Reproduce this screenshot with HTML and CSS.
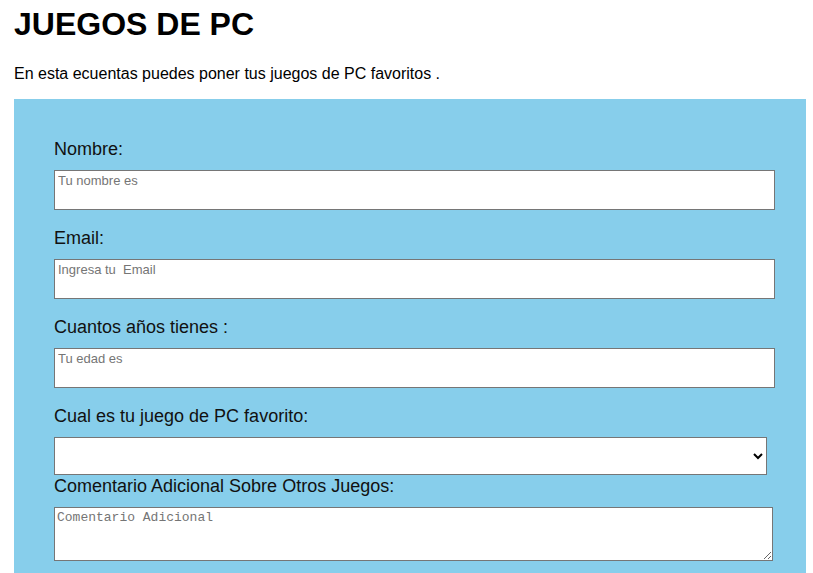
FILE: index.html
```html
<!DOCTYPE html>
<html lang="es">
<head>
<meta charset="utf-8">
<title>Juegos de PC</title>
<link rel="stylesheet" href="styles.css">
</head>
<body>
<h1 class="title">JUEGOS DE PC</h1>
<p class="intro">En esta ecuentas puedes poner tus juegos de PC favoritos .</p>
<form class="panel">
  <label class="field-label" for="nombre">Nombre:</label>
  <input class="text-input" id="nombre" type="text" placeholder="Tu nombre es">
  <label class="field-label" for="email">Email:</label>
  <input class="text-input" id="email" type="email" placeholder="Ingresa tu  Email">
  <label class="field-label" for="edad">Cuantos años tienes :</label>
  <input class="text-input" id="edad" type="text" placeholder="Tu edad es">
  <label class="field-label" for="juego">Cual es tu juego de PC favorito:</label>
  <select class="select-input" id="juego">
    <option></option>
  </select>
  <label class="field-label label-tight" for="comentario">Comentario Adicional Sobre Otros Juegos:</label>
  <textarea class="area-input" id="comentario" placeholder="Comentario Adicional"></textarea>
</form>
</body>
</html>
```
FILE: styles.css
```css
html, body {
  margin: 0;
  padding: 0;
}
body {
  font-family: "Liberation Sans", Arial, sans-serif;
  color: #000;
  background: #fff;
  padding: 0 7px 0 14px;
  overflow: hidden;
  height: 573px;
}
.title {
  font-size: 32px;
  font-weight: bold;
  margin: 0;
  padding-top: 6px;
  line-height: 37px;
}
.intro {
  font-size: 16px;
  margin: 0;
  padding-top: 22px;
  line-height: 18px;
}
.panel {
  margin-top: 16px;
  background: #87ceeb;
  padding: 39px 40px 40px 40px;
  display: flex;
  flex-direction: column;
  align-items: flex-start;
}
.field-label {
  font-size: 18px;
  line-height: 21px;
  padding-top: 1px;
  color: #111;
}
.text-input {
  box-sizing: border-box;
  width: 721px;
  height: 40px;
  margin: 10px 0 17px 0;
  border: 1px solid #767676;
  border-radius: 0;
  padding: 2px 3px 21px 3px;
  font-family: "Liberation Sans", Arial, sans-serif;
  font-size: 13px;
  background: #fff;
  outline: none;
}
.text-input::placeholder {
  color: #757575;
}
.select-input {
  box-sizing: border-box;
  width: 713px;
  height: 38px;
  margin: 10px 0 0 0;
  border: 1px solid #767676;
  border-radius: 0;
  background: #fff;
  font-family: "Liberation Sans", Arial, sans-serif;
  font-size: 13px;
}
.label-tight {
  margin-top: 0;
}
.area-input {
  box-sizing: border-box;
  width: 719px;
  height: 54px;
  margin: 10px 0 0 0;
  border: 1px solid #767676;
  border-radius: 0;
  padding: 2px 2px;
  font-family: "Liberation Mono", "Courier New", monospace;
  font-size: 13px;
  background: #fff;
}
.area-input::placeholder {
  color: #757575;
}
```
